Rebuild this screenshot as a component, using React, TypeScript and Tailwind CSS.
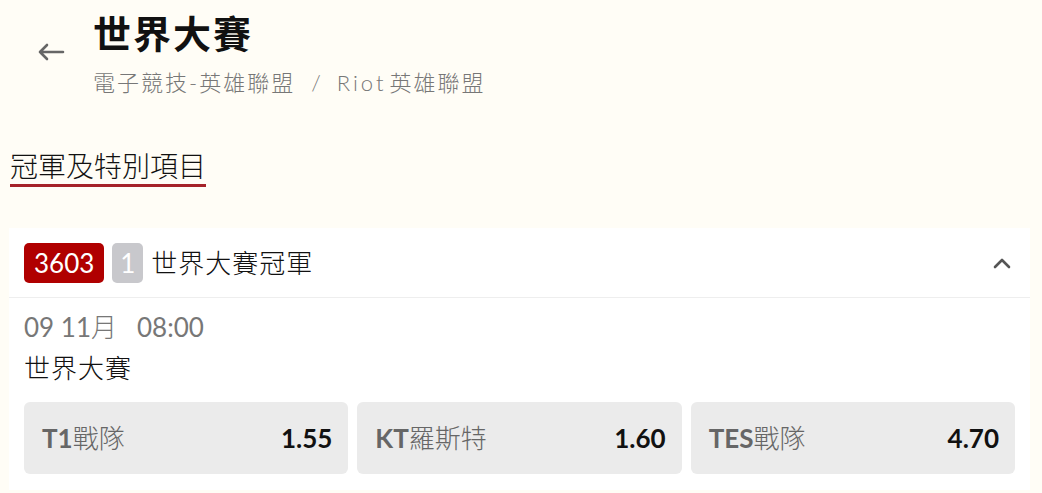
import React from "react";

const latin = "font-['Lato','Noto_Sans_CJK_TC',sans-serif]";

function Odd({ team, zh, odd }: { team: string; zh: string; odd: string }) {
  return (
    <div className="flex-1 h-[72px] rounded-[6px] bg-[#ebebeb] flex items-center justify-between pl-[18px] pr-[16px]">
      <span className="text-[26px] leading-[32px] text-[#666]">
        <span className="font-bold">{team}</span>
        <span className="font-light">{zh}</span>
      </span>
      <span className="text-[26px] leading-[32px] font-bold text-[#111]">{odd}</span>
    </div>
  );
}

export default function App() {
  return (
    <div className={`${latin} min-h-screen w-full bg-[#fffdf6] text-[#111] overflow-hidden`}>
      <div className="flex items-center pl-[35px] pt-[10px]">
        <svg width="30" height="20" viewBox="0 0 30 20" className="shrink-0 mt-[-4px]">
          <path d="M28 10H5M12 3L5 10L12 17" fill="none" stroke="#666" strokeWidth="2.6" strokeLinecap="round" strokeLinejoin="round" />
        </svg>
        <div className="ml-[28px]">
          <div className="text-[38px] leading-[46px] font-bold text-[#111] tracking-[2px]">世界大賽</div>
          <div className="mt-[12px] text-[22px] leading-[30px] font-light text-[#777]">
            <span className="tracking-[2px]">電子競技-英雄聯盟</span>
            <span className="mx-[16px]">/</span>
            <span className="tracking-[3px]">Riot</span>
            <span className="ml-[3px] tracking-[2px]">英雄聯盟</span>
          </div>
        </div>
      </div>

      <div className="ml-[10px] mt-[50px]">
        <div className="inline-block border-b-[3px] border-[#a52229] text-[28px] leading-[36px] font-light text-[#111]">
          冠軍及特別項目
        </div>
      </div>

      <div className="ml-[9px] mr-[12px] mt-[41px] bg-white">
        <div className="h-[70px] flex items-center pl-[15px] pr-[18px] border-b border-[#eeeeee]">
          <span className="h-[40px] px-[10px] rounded-[5px] bg-[#b00000] text-white text-[26px] leading-[40px]">3603</span>
          <span className="ml-[8px] h-[40px] w-[31px] rounded-[5px] bg-[#c8c8cc] text-white text-[26px] leading-[40px] text-center">1</span>
          <span className="ml-[8px] text-[26px] leading-[40px] font-light text-[#111] tracking-[1px]">世界大賽冠軍</span>
          <svg width="20" height="12" viewBox="0 0 20 12" className="ml-auto">
            <path d="M3 10L10 3L17 10" fill="none" stroke="#555" strokeWidth="2.6" strokeLinecap="round" strokeLinejoin="round" />
          </svg>
        </div>
        <div className="px-[15px] pt-[14px] pb-[16px]">
          <div className="text-[26px] leading-[30px] text-[#777]">
            09 11<span className="font-light">月</span><span className="ml-[20px]">08:00</span>
          </div>
          <div className="mt-[10px] text-[26px] leading-[32px] font-light text-[#111] tracking-[1px]">世界大賽</div>
          <div className="mt-[18px] flex gap-[9px]">
            <Odd team="T1" zh="戰隊" odd="1.55" />
            <Odd team="KT" zh="羅斯特" odd="1.60" />
            <Odd team="TES" zh="戰隊" odd="4.70" />
          </div>
        </div>
      </div>
    </div>
  );
}
